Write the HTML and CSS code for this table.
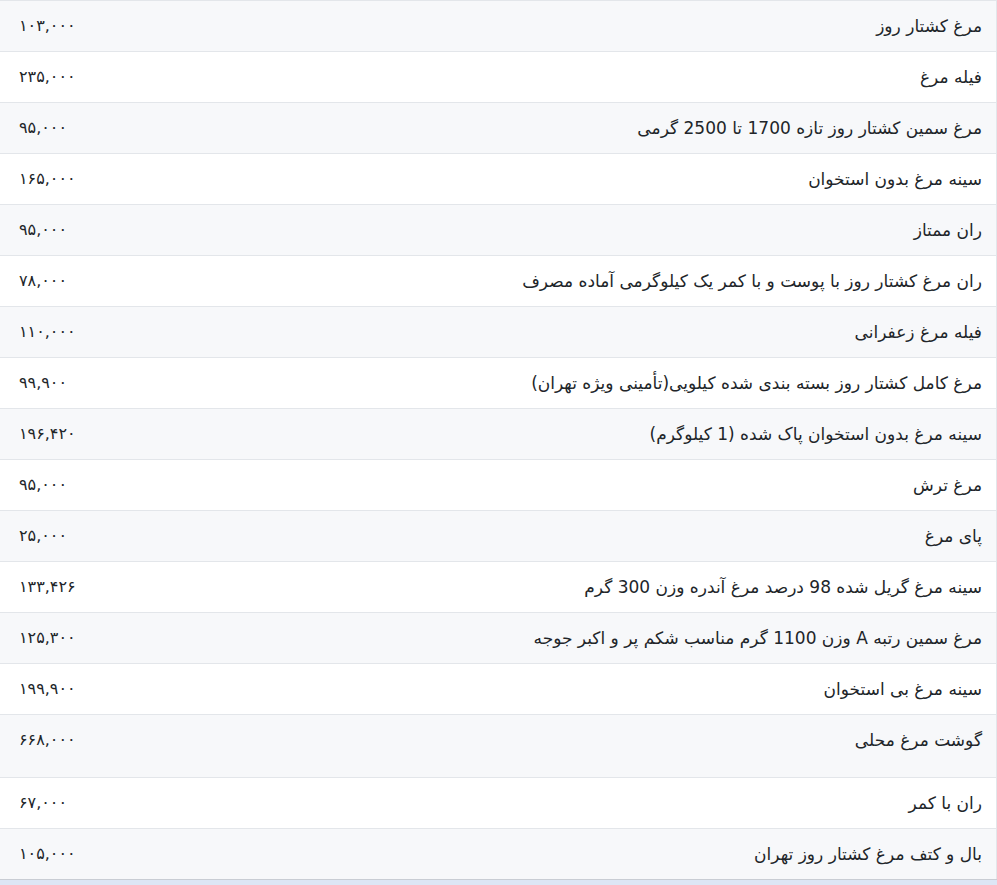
FILE: index.html
```html
<!DOCTYPE html>
<html lang="fa" dir="rtl">
<head>
<meta charset="utf-8">
<title>قیمت مرغ</title>
<link rel="stylesheet" href="styles.css">
</head>
<body>
<div class="wrap">
<table class="prices">
<tbody>
<tr><td class="name">مرغ کشتار روز</td><td class="price">۱۰۳,۰۰۰</td></tr>
<tr><td class="name">فیله مرغ</td><td class="price">۲۳۵,۰۰۰</td></tr>
<tr><td class="name">مرغ سمین کشتار روز تازه 1700 تا 2500 گرمی</td><td class="price">۹۵,۰۰۰</td></tr>
<tr><td class="name">سینه مرغ بدون استخوان</td><td class="price">۱۶۵,۰۰۰</td></tr>
<tr><td class="name">ران ممتاز</td><td class="price">۹۵,۰۰۰</td></tr>
<tr><td class="name">ران مرغ کشتار روز با پوست و با کمر یک کیلوگرمی آماده مصرف</td><td class="price">۷۸,۰۰۰</td></tr>
<tr><td class="name">فیله مرغ زعفرانی</td><td class="price">۱۱۰,۰۰۰</td></tr>
<tr><td class="name">مرغ کامل کشتار روز بسته بندی شده کیلویی(تأمینی ویژه تهران)</td><td class="price">۹۹,۹۰۰</td></tr>
<tr><td class="name">سینه مرغ بدون استخوان پاک شده (1 کیلوگرم)</td><td class="price">۱۹۶,۴۲۰</td></tr>
<tr><td class="name">مرغ ترش</td><td class="price">۹۵,۰۰۰</td></tr>
<tr><td class="name">پای مرغ</td><td class="price">۲۵,۰۰۰</td></tr>
<tr><td class="name">سینه مرغ گریل شده 98 درصد مرغ آندره وزن 300 گرم</td><td class="price">۱۳۳,۴۲۶</td></tr>
<tr><td class="name">مرغ سمین رتبه A وزن 1100 گرم مناسب شکم پر و اکبر جوجه</td><td class="price">۱۲۵,۳۰۰</td></tr>
<tr><td class="name">سینه مرغ بی استخوان</td><td class="price">۱۹۹,۹۰۰</td></tr>
<tr class="tall"><td class="name">گوشت مرغ محلی</td><td class="price">۶۶۸,۰۰۰</td></tr>
<tr><td class="name">ران با کمر</td><td class="price">۶۷,۰۰۰</td></tr>
<tr><td class="name">بال و کتف مرغ کشتار روز تهران</td><td class="price">۱۰۵,۰۰۰</td></tr>
</tbody>
</table>
<div class="footer-band"></div>
</div>
</body>
</html>
```
FILE: styles.css
```css
html, body {
  margin: 0;
  padding: 0;
  background: #ffffff;
}
body {
  font-family: "DejaVu Sans", "Noto Sans", sans-serif;
  font-size: 16px;
  color: #212529;
}
.wrap {
  width: 997px;
}
.prices {
  width: 997px;
  border-collapse: collapse;
  border-right: 1px solid #e3e6ea;
}
.prices td {
  border-top: 1px solid #e3e6ea;
  padding: 13px 14px 13px 14px;
  line-height: 24px;
  vertical-align: top;
}
.prices tr:nth-child(odd) td {
  background: #f7f8fa;
}
.prices tr:nth-child(even) td {
  background: #ffffff;
}
.prices tr:last-child td {
  border-bottom: 1px solid #c9cdd4;
}
.prices .name {
  text-align: right;
  font-size: 17px;
}
.prices .price {
  text-align: left;
  padding-left: 19px;
  white-space: nowrap;
  font-size: 16px;
}
.prices tr.tall td {
  padding-bottom: 25px;
}
.footer-band {
  height: 6px;
  background: #dde6f5;
}
```
